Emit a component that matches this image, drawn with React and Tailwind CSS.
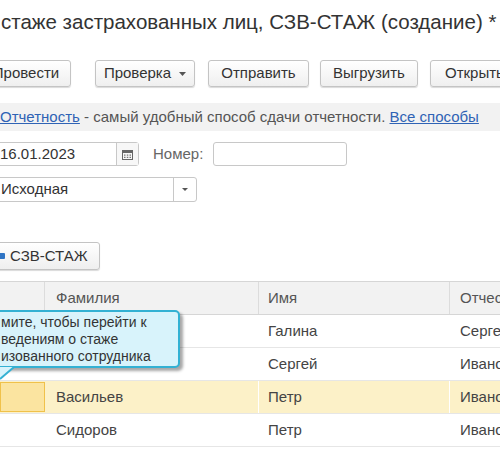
import React from "react";

const btn =
  "flex h-[27px] shrink-0 items-center justify-center rounded-[3px] border border-[#c4c4c4] bg-gradient-to-b from-white to-[#efefef] text-[15px] text-[#333] shadow-[0_1px_1px_rgba(0,0,0,0.15)]";

const Caret = () => (
  <svg width="7" height="4" viewBox="0 0 7 4" className="shrink-0">
    <path d="M0 0h7L3.5 4z" fill="#555" />
  </svg>
);

const rows = [
  { last: "", first: "Галина", middle: "Сергеевна" },
  { last: "", first: "Сергей", middle: "Иванович" },
  { last: "Васильев", first: "Петр", middle: "Иванович", active: true },
  { last: "Сидоров", first: "Петр", middle: "Иванович" },
];

export default function App() {
  return (
    <div className="relative h-[450px] w-[500px] overflow-hidden bg-white font-['Liberation_Sans',Arial,sans-serif] text-[#333]">
      {/* Title */}
      <div className="flex h-[44px] items-center whitespace-nowrap pl-px text-[20.5px] text-[#333]">
        стаже застрахованных лиц, СЗВ-СТАЖ (создание) *
      </div>

      {/* Toolbar */}
      <div className="mt-[16px] flex whitespace-nowrap">
        <button className={`${btn} ml-[-19px] w-[90px]`}>Провести</button>
        <button className={`${btn} ml-[24px] w-[100px] gap-[8px]`}>
          Проверка <Caret />
        </button>
        <button className={`${btn} ml-[13px] w-[101px]`}>Отправить</button>
        <button className={`${btn} ml-[11px] w-[98px]`}>Выгрузить</button>
        <button className={`${btn} ml-[12px] w-[100px] justify-start pl-[14px]`}>Открыть</button>
      </div>

      {/* Info bar */}
      <div className="mt-[16px] flex h-[28px] items-center whitespace-nowrap bg-[#f2f2f2] text-[15px] text-[#555]">
        <a className="text-[#2f63b5] underline">Отчетность</a>
        <span>&nbsp;- самый удобный способ сдачи отчетности.&nbsp;</span>
        <a className="text-[#2f63b5] underline">Все способы</a>
      </div>

      {/* Date / number */}
      <div className="mt-[11px] flex h-[24px] items-center whitespace-nowrap text-[15px]">
        <div className="ml-[-6px] flex h-full w-[145px] shrink-0 rounded-[3px] border border-[#c8c8c8] bg-white">
          <div className="flex flex-1 items-center pl-[5px] text-[#333]">16.01.2023</div>
          <div className="flex w-[22px] items-center justify-center border-l border-[#c8c8c8] bg-[#f7f7f7]">
            <svg width="11" height="11" viewBox="0 0 11 11">
              <rect x="0.5" y="1.5" width="10" height="9" fill="none" stroke="#666" />
              <rect x="0.5" y="1.5" width="10" height="2.5" fill="#666" />
              <path d="M2 5.5h1.5v1.2H2zM4.8 5.5h1.5v1.2H4.8zM7.5 5.5H9v1.2H7.5zM2 7.8h1.5V9H2zM4.8 7.8h1.5V9H4.8zM7.5 7.8H9V9H7.5z" fill="#777" />
            </svg>
          </div>
        </div>
        <span className="ml-[14px] text-[#666]">Номер:</span>
        <div className="ml-[10px] h-full w-[134px] shrink-0 rounded-[3px] border border-[#c8c8c8] bg-white" />
      </div>

      {/* Kind */}
      <div className="mt-[11px] flex h-[25px] items-center whitespace-nowrap text-[15px]">
        <div className="ml-[-6px] flex h-full w-[203px] rounded-[3px] border border-[#c8c8c8] bg-white">
          <div className="flex flex-1 items-center pl-[6px] text-[#333]">Исходная</div>
          <div className="flex w-[23px] items-center justify-center border-l border-[#c8c8c8]">
            <svg width="6" height="3" viewBox="0 0 6 3">
              <path d="M0 0h6L3 3z" fill="#555" />
            </svg>
          </div>
        </div>
      </div>

      {/* СЗВ-СТАЖ button */}
      <div className="mt-[40px] flex">
        <button className={`${btn} ml-[-12px] h-[28px] w-[112px] justify-start gap-[5px] pl-[8px]`}>
          <span className="block h-[6px] w-[8px] rounded-[1px] bg-[#2f74c4]" />
          <span>СЗВ-СТАЖ</span>
        </button>
      </div>

      {/* Table */}
      <div className="relative mt-[11px] text-[15px] text-[#444]">
        <div className="flex h-[34px] border-y border-[#d6d6d6] bg-[#f2f2f2] text-[#555]">
          <div className="w-[45px] shrink-0 border-r border-[#dcdcdc]" />
          <div className="flex w-[214px] shrink-0 items-center border-r border-[#dcdcdc] pl-[11px]">Фамилия</div>
          <div className="flex w-[191px] shrink-0 items-center border-r border-[#dcdcdc] pl-[9px]">Имя</div>
          <div className="flex min-w-0 flex-1 items-center overflow-hidden whitespace-nowrap pl-[10px]">Отчество</div>
        </div>
        {rows.map((r, i) => (
          <div
            key={i}
            className={`flex h-[33px] border-b border-[#e6e6e6] whitespace-nowrap ${r.active ? "bg-[#fcf1c8]" : "bg-white"}`}
          >
            <div className={`w-[45px] shrink-0 ${r.active ? "my-[1px] border border-[#f0c14a] bg-[#fbe4a0]" : ""}`} />
            <div className={`flex w-[214px] shrink-0 items-center pl-[11px] ${r.active ? "border-r border-white" : ""}`}>{r.last}</div>
            <div className={`flex w-[191px] shrink-0 items-center pl-[9px] ${r.active ? "border-r border-white" : ""}`}>{r.first}</div>
            <div className="flex min-w-0 flex-1 items-center overflow-hidden pl-[10px]">{r.middle}</div>
          </div>
        ))}

        {/* Tooltip */}
        <div className="absolute left-[-20px] top-[29px] h-[58px] w-[200px] rounded-[5px] border-2 border-[#33b1d3] bg-[#d8f3fb] shadow-[3px_3px_3px_rgba(0,0,0,0.35)]">
          <div className="flex h-full flex-col justify-center whitespace-nowrap pl-[19px] text-[14px] leading-[17px] text-[#333]">
            <div>мите, чтобы перейти к</div>
            <div>ведениям о стаже</div>
            <div>изованного сотрудника</div>
          </div>
        </div>
        <svg className="absolute left-0 top-[84px]" width="16" height="16" viewBox="0 0 16 16">
          <path d="M0 2 L14 2 L0 14 Z" fill="#d8f3fb" />
          <path d="M14 2 L0 14" stroke="#33b1d3" strokeWidth="2" fill="none" />
        </svg>
      </div>
    </div>
  );
}
